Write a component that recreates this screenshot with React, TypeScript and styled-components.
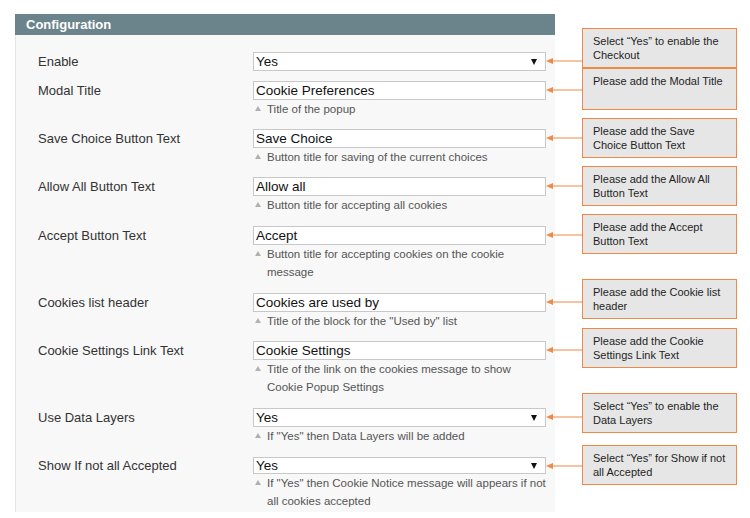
import React from 'react';
import styled, { createGlobalStyle } from 'styled-components';

interface Field {
  label: string;
  value: string;
  select?: boolean;
  hint?: string;
  note: string;
  noteTop: number;
  noteHeight?: number;
  gap?: number;
  height?: number;
}

const fields: Field[] = [
  { label: 'Enable', value: 'Yes', select: true, note: 'Select \u201cYes\u201d to enable the Checkout', noteTop: -25, gap: 10 },
  { label: 'Modal Title', value: 'Cookie Preferences', hint: 'Title of the popup', note: 'Please add the Modal Title', noteTop: -14, noteHeight: 42 },
  { label: 'Save Choice Button Text', value: 'Save Choice', hint: 'Button title for saving of the current choices', note: 'Please add the Save Choice Button Text', noteTop: -12 },
  { label: 'Allow All Button Text', value: 'Allow all', hint: 'Button title for accepting all cookies', note: 'Please add the Allow All Button Text', noteTop: -12, gap: 12 },
  { label: 'Accept Button Text', value: 'Accept', hint: 'Button title for accepting cookies on the cookie message', note: 'Please add the Accept Button Text', noteTop: -13, gap: 12 },
  { label: 'Cookies list header', value: 'Cookies are used by', hint: 'Title of the block for the "Used by" list', note: 'Please add the Cookie list header', noteTop: -15 },
  { label: 'Cookie Settings Link Text', value: 'Cookie Settings', hint: 'Title of the link on the cookies message to show Cookie Popup Settings', note: 'Please add the Cookie Settings Link Text', noteTop: -14, gap: 12 },
  { label: 'Use Data Layers', value: 'Yes', select: true, hint: 'If "Yes" then Data Layers will be added', note: 'Select \u201cYes\u201d to enable the Data Layers', noteTop: -16, gap: 12 },
  { label: 'Show If not all Accepted', value: 'Yes', select: true, hint: 'If "Yes" then Cookie Notice message will appears if not all cookies accepted', note: 'Select \u201cYes\u201d for Show if not all Accepted', noteTop: -13, height: 17 },
];

const GlobalStyle = createGlobalStyle`
  html, body {
    margin: 0;
    padding: 0;
    background: #ffffff;
    font-family: "Liberation Sans", Arial, sans-serif;
  }
`;

const Page = styled.div`
  width: 750px;
  height: 518px;
  overflow: hidden;
  padding: 14px 0 0 15px;
  box-sizing: border-box;
`;

const Panel = styled.section`
  width: 540px;
  height: 498px;
  background: #f8f8f8;
  border-left: 1px solid #e4e4e4;
  box-sizing: border-box;
`;

const Header = styled.div`
  height: 21px;
  background: #6b838b;
  color: #ffffff;
  font-size: 13px;
  font-weight: bold;
  line-height: 21px;
  padding-left: 11px;
  margin-left: -1px;
`;

const Body = styled.div`
  padding: 17px 0 0 22px;
`;

const Row = styled.div<{ $gap: number }>`
  display: grid;
  grid-template-columns: 215px 293px;
  align-items: start;
  margin-bottom: ${(p) => p.$gap}px;
`;

const Label = styled.div<{ $height: number }>`
  font-size: 13px;
  color: #333333;
  line-height: ${(p) => p.$height}px;
`;

const FieldCol = styled.div`
  position: relative;
`;

const Input = styled.div<{ $height: number }>`
  position: relative;
  height: ${(p) => p.$height}px;
  box-sizing: border-box;
  border: 1px solid #c8c8c8;
  background: #ffffff;
  font-size: 13.5px;
  line-height: ${(p) => p.$height - 2}px;
  color: #111111;
  padding-left: 2px;
`;

const Caret = styled.span`
  position: absolute;
  right: 8px;
  top: 50%;
  margin-top: -3px;
  width: 0;
  height: 0;
  border-left: 3.5px solid transparent;
  border-right: 3.5px solid transparent;
  border-top: 6px solid #111111;
`;

const Hint = styled.div`
  position: relative;
  padding-left: 14px;
  font-size: 11.5px;
  line-height: 18px;
  color: #555555;

  &::before {
    content: '';
    position: absolute;
    left: 2px;
    top: 6px;
    border-left: 3px solid transparent;
    border-right: 3px solid transparent;
    border-bottom: 5px solid #b0b0b0;
  }
`;

const Callout = styled.div`
  position: absolute;
  left: 100%;
  top: 0;
  width: 200px;
  height: 0;
`;

const Arrow = styled.svg`
  position: absolute;
  left: 1px;
  top: 3px;
`;

const NoteBox = styled.div<{ $top: number; $height: number }>`
  position: absolute;
  left: 37px;
  top: ${(p) => p.$top}px;
  width: 155px;
  height: ${(p) => p.$height}px;
  box-sizing: border-box;
  background: #e6e6e6;
  border: 1.5px solid #ee8a45;
  padding: 5px 8px 0 10px;
  font-size: 11px;
  line-height: 14px;
  color: #1e1e1e;
`;

const App: React.FC = () => {
  return (
    <Page>
      <GlobalStyle />
      <Panel>
        <Header>Configuration</Header>
        <Body>
          {fields.map((f) => {
            const h = f.height ?? 19;
            return (
              <Row key={f.label} $gap={f.gap ?? 11}>
                <Label $height={h}>{f.label}</Label>
                <FieldCol>
                  <Input $height={h}>
                    {f.value}
                    {f.select && <Caret />}
                    <Callout>
                      <Arrow width="38" height="10" viewBox="0 0 38 10">
                        <line x1="5" y1="5" x2="38" y2="5" stroke="#ee8a45" strokeWidth="1.2" />
                        <path d="M0 5 L7 2 L7 8 Z" fill="#ee8a45" />
                      </Arrow>
                      <NoteBox $top={f.noteTop} $height={f.noteHeight ?? 40}>
                        {f.note}
                      </NoteBox>
                    </Callout>
                  </Input>
                  {f.hint && <Hint>{f.hint}</Hint>}
                </FieldCol>
              </Row>
            );
          })}
        </Body>
      </Panel>
    </Page>
  );
};

export default App;
